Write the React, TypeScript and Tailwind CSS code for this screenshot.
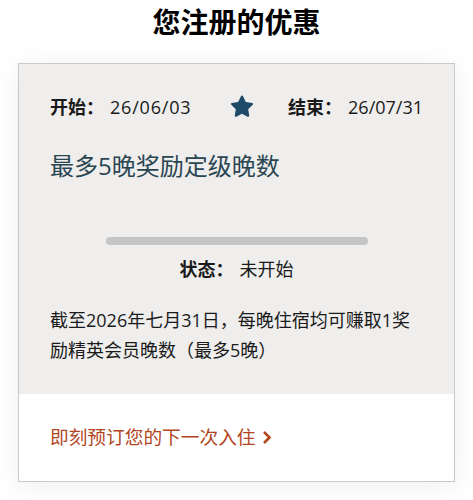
import React from "react";

const font = { fontFamily: '"Open Sans", "Noto Sans CJK SC", sans-serif' };

const Star = () => (
  <svg width="28" height="28" viewBox="0 0 24 24" className="text-[#1e4a68]">
    <path
      d="M12 2.2c.4 0 .7.2.9.6l2.4 4.9 5.4.8c.8.1 1.1 1.1.5 1.6l-3.9 3.8.9 5.4c.1.8-.7 1.4-1.4 1l-4.8-2.5-4.8 2.5c-.7.4-1.5-.2-1.4-1l.9-5.4L2.8 10.1c-.6-.5-.3-1.5.5-1.6l5.4-.8 2.4-4.9c.2-.4.5-.6.9-.6z"
      fill="currentColor"
    />
  </svg>
);

export default function App() {
  return (
    <div className="min-h-[500px] bg-white text-[#1a1a1a]" style={font}>
      <h1 className="pt-[2px] text-center text-[28px] font-bold leading-[40px] text-black">
        您注册的优惠
      </h1>
      <div className="mx-[18px] mt-[21px] border border-[#c9c9c9] bg-white shadow-[0_4px_24px_rgba(0,0,0,0.07)]">
        <div className="bg-[#efeeed] px-[31px] pt-[29px] pb-[29px]">
          <div className="flex h-[28px] items-center justify-between text-[18px]">
            <div className="flex items-center">
              <span className="font-bold">开始：</span>
              <span className="ml-[6px] tracking-[0.8px]">26/06/03</span>
            </div>
            <div className="ml-[4px]">
              <Star />
            </div>
            <div className="flex items-center">
              <span className="font-bold">结束：</span>
              <span className="ml-[6px]">26/07/31</span>
            </div>
          </div>
          <div className="mt-[29px] text-[24px] leading-[32px] text-[#2a4552]">
            最多5晚奖励定级晚数
          </div>
          <div className="mt-[55px] flex justify-center">
            <div className="h-[8px] w-[262px] rounded-full bg-[#c4c6c6]" />
          </div>
          <div className="mt-[11px] flex justify-center text-[18px] leading-[26px]">
            <span className="font-bold">状态：</span>
            <span className="ml-[6px]">未开始</span>
          </div>
          <p className="mt-[23px] text-[18px] leading-[30px]">
            截至2026年七月31日，每晚住宿均可赚取1奖励精英会员晚数（最多5晚）
          </p>
        </div>
        <div className="px-[31px] pt-[30px] pb-[31px]">
          <a className="flex items-center text-[18.7px] leading-[26px] text-[#b2461f]">
            即刻预订您的下一次入住
            <svg width="10" height="15" viewBox="0 0 10 15" className="ml-[6px]">
              <path d="M2 2l5.5 5.5L2 13" fill="none" stroke="currentColor" strokeWidth="2.6" />
            </svg>
          </a>
        </div>
      </div>
    </div>
  );
}
